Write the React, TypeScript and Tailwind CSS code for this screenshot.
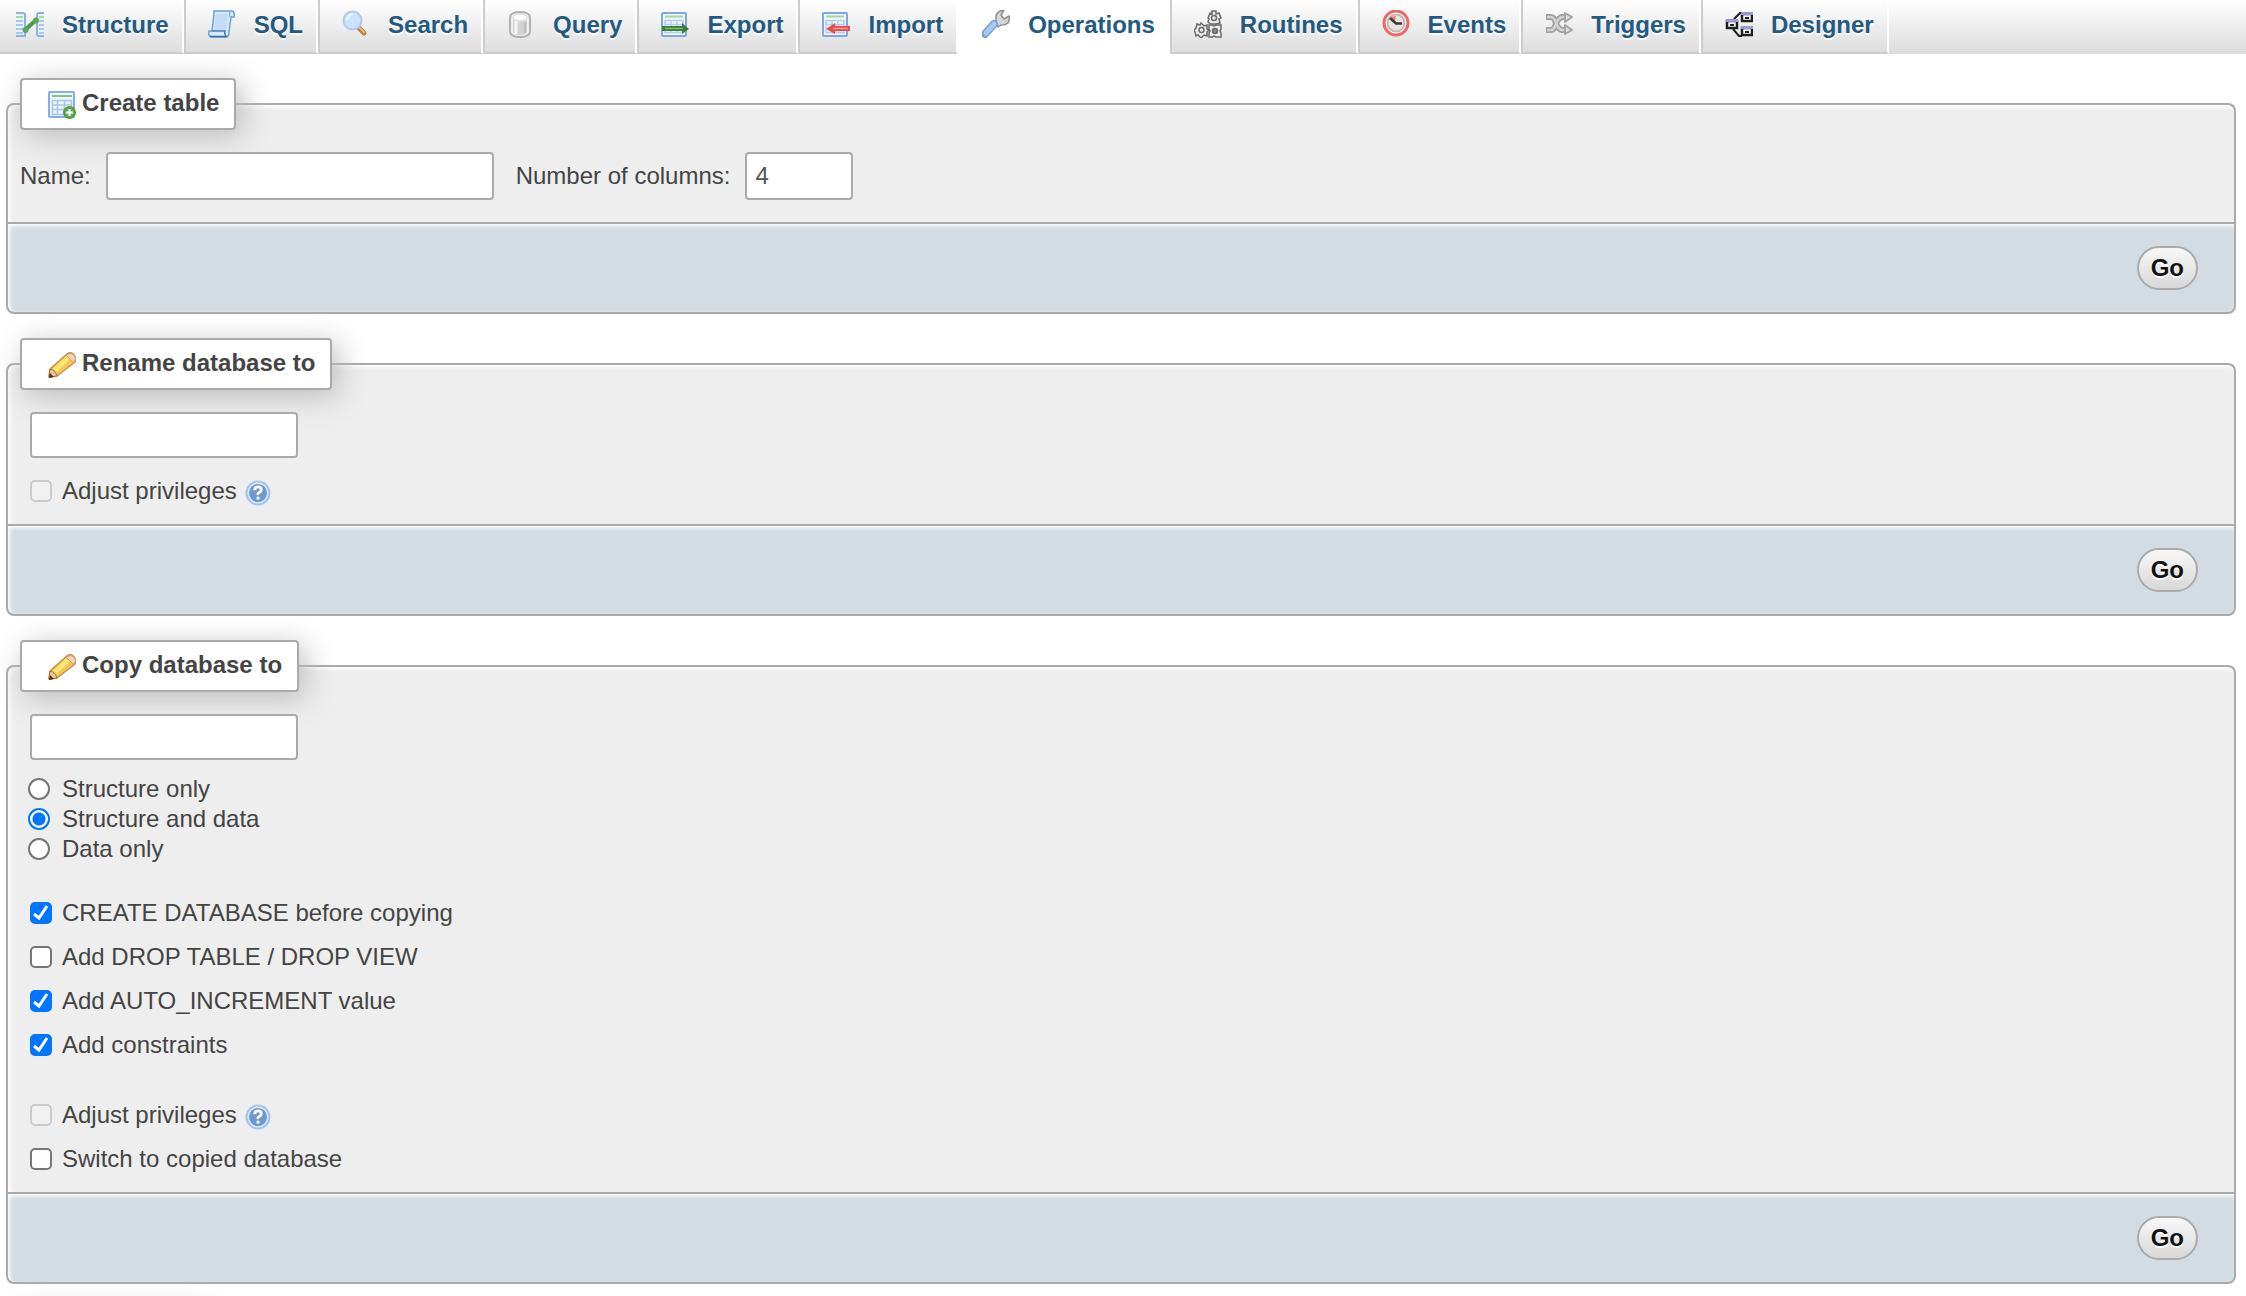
import React, { useState } from 'react';

type IconProps = { className?: string };

// Small drawings, all on a 28x28 grid

function StructureIcon({ className }: IconProps) {
  return (
    <svg viewBox="0 0 28 28" className={className} aria-hidden="true">
      <path d="M0 3h7q2 0 2 2v21H0M28 3h-5q-2 0-2 2v19q0 2 2 2h5" fill="#eaf3ff" stroke="#8db1e6" strokeWidth="2" />
      <path d="M0 7h7M23 7h5" stroke="#a9dd96" strokeWidth="2" />
      <path d="M0 11h7M0 15h7M0 19h7M0 23h7M23 11h5M23 15h5M23 19h5M23 23h5" stroke="#a6c8f2" strokeWidth="2" />
      <path d="M9 20 20 10" stroke="#4f9a49" strokeWidth="4" />
      <circle cx="9.500" cy="20" r="3" fill="#5da854" />
      <circle cx="20" cy="10.500" r="3" fill="#5da854" />
    </svg>
  );
}

function SqlIcon({ className }: IconProps) {
  return (
    <svg viewBox="0 0 28 28" className={className} aria-hidden="true">
      <path d="M6 1h18q3 1 2 6h-3l-2 15q0 5-3 5H3q-3-1-2-6h3L6 4z" fill="#d7e9fd" stroke="#6d9fdb" strokeWidth="1.500" />
      <path d="M8 4h12l-2 17H6z" fill="#c3dcf8" />
      <path d="M4 21h13q-1 3 1 5" fill="none" stroke="#4a78b5" strokeWidth="1.500" />
      <path d="M2 26.500h17" stroke="#3e6aa3" strokeWidth="1.500" />
      <path d="M22 2q-1 2 0 5" fill="none" stroke="#6d9fdb" />
    </svg>
  );
}

function SearchIcon({ className }: IconProps) {
  return (
    <svg viewBox="0 0 28 28" className={className} aria-hidden="true">
      <path d="m17 18 5 5" stroke="#bb8145" strokeWidth="5" strokeLinecap="round" />
      <path d="m17 17 5 5" stroke="#e6b97a" strokeWidth="2" strokeLinecap="round" />
      <circle cx="10.500" cy="10.500" r="9" fill="#cbe3fd" stroke="#b3c8ea" strokeWidth="2" />
      <path d="M5 10q1-5 6-6" fill="none" stroke="#eef7ff" strokeWidth="2" />
    </svg>
  );
}

function QueryIcon({ className }: IconProps) {
  return (
    <svg viewBox="0 0 28 28" className={className} aria-hidden="true">
      <path d="M3 7q1-5 10-5t10 5v15q-1 5-10 5T3 22z" fill="#f0f0f0" stroke="#b0b0b0" strokeWidth="2" />
      <path d="M6 10v12q2 3 7 3t7-3V10q-3 2-7 2t-7-2z" fill="#d2d2d2" />
      <path d="M9 11v13" stroke="#f6f6f6" strokeWidth="3" />
      <path d="M18 12v11" stroke="#bdbdbd" strokeWidth="2" />
      <ellipse cx="13" cy="7.500" rx="7" ry="3.500" fill="#fbfbfb" stroke="#d8d8d8" />
    </svg>
  );
}

function SheetBase() {
  return (
    <>
      <rect x="1" y="3" width="24" height="23" rx="1" fill="#f0f6ff" stroke="#7fa8e2" strokeWidth="2" />
      <path d="M4 6.500h18" stroke="#a5d893" strokeWidth="2" />
      <path d="M4 10.500h18v12H4zM4 14.500h18M4 18.500h18M10 10v12M16 10v12" fill="none" stroke="#b3cdf0" strokeWidth="1.500" />
    </>
  );
}

function ExportIcon({ className }: IconProps) {
  return (
    <svg viewBox="0 0 28 28" className={className} aria-hidden="true">
      <SheetBase />
      <path d="M1 16h20v-3l7 6-7 5v-3H1z" fill="#3c7d36" />
      <path d="M4 18.500h18" stroke="#79bb6b" strokeWidth="1.500" />
    </svg>
  );
}

function ImportIcon({ className }: IconProps) {
  return (
    <svg viewBox="0 0 28 28" className={className} aria-hidden="true">
      <SheetBase />
      <path d="M28 16H13v-3l-9 6 9 5v-3h15z" fill="#ec4a48" />
      <path d="M11 18.500h15" stroke="#ff9d98" strokeWidth="1.500" />
    </svg>
  );
}

function WrenchIcon({ className }: IconProps) {
  return (
    <svg viewBox="0 0 28 28" className={className} aria-hidden="true">
      <path
        d="M14 12V6q1-5 8-6l-3 5 3 4 5-3q2 9-8 9l-3 2z"
        fill="#d6d6d6"
        stroke="#8d8d8d"
        strokeWidth="1.500"
        strokeLinejoin="round"
      />
      <path d="m3 24 9-10" stroke="#7d9fda" strokeWidth="8" strokeLinecap="round" />
      <path d="m4 23 8-9" stroke="#a9c8f4" strokeWidth="5" strokeLinecap="round" />
    </svg>
  );
}

function RoutinesIcon({ className }: IconProps) {
  return (
    <svg viewBox="0 0 28 28" className={className} aria-hidden="true">
      <g fill="#ececec" stroke="#6b6b6b" strokeWidth="1.500">
        <path d="M18 1h4v3l3-1 2 5-2 1 1 4-4 1h-5l-3-2 1-3-1-1 2-5 2 1z" />
        <path d="m7 13 3 3 3-1v4l2 1-2 2v4l-3-1-3 3-3-3-2 1-1-4-1-2 2-2 1-4 3 1z" />
        <path d="M15 15h3l2 1 2-1h5v4l-1 2 1 2v4h-5l-2-1-2 1h-3v-4l1-2-1-2z" />
        <circle cx="20" cy="8" r="2.500" />
        <circle cx="7.500" cy="20" r="2.500" />
        <circle cx="21" cy="21" r="2.500" fill="#8b8b8b" />
      </g>
    </svg>
  );
}

function EventsIcon({ className }: IconProps) {
  return (
    <svg viewBox="0 0 28 28" className={className} aria-hidden="true">
      <circle cx="14" cy="13" r="12" fill="#fff" stroke="#ee6a67" strokeWidth="3" />
      <circle cx="14" cy="13" r="8.500" fill="#e8e5e2" stroke="#bdbab8" strokeWidth="2" />
      <path d="m13 12 1-6-5 1z" fill="#f37b78" />
      <path d="m8 8 6 5.500h6" fill="none" stroke="#3a3a3a" strokeWidth="2.500" />
    </svg>
  );
}

function TriggersIcon({ className }: IconProps) {
  return (
    <svg viewBox="0 0 28 28" className={className} aria-hidden="true">
      <g fill="none" strokeLinejoin="round">
        <path d="M1 7h5q3 0 5 6t6 7h4M1 20h5q3 0 5-6t6-7h4" stroke="#a0a0a0" strokeWidth="6" />
        <path d="M2 7h4q3 0 5 6t6 7h4M2 20h4q3 0 5-6t6-7h4" stroke="#d2d2d2" strokeWidth="2.500" />
      </g>
      <path d="m20 3 7 4-7 5zM20 15l7 5-7 4z" fill="#dedede" stroke="#a4a4a4" strokeWidth="2" strokeLinejoin="round" />
    </svg>
  );
}

function DesignerIcon({ className }: IconProps) {
  return (
    <svg viewBox="0 0 28 28" className={className} aria-hidden="true">
      <path d="m9 9 6-6h3M8 19l6 7h3" fill="none" stroke="#1f1f1f" strokeWidth="2" />
      <g fill="#fff" stroke="#1f1f1f" strokeWidth="2.500">
        <path d="M2 11v7h10v-7zM17 4v7h10V4zM17 18v7h10v-7z" />
        <path d="M5 15h4M20 8h4M20 22h4" strokeWidth="2" />
      </g>
      <path d="M1 9h12v3H1zM16 2h12v3H16zM16 16h12v3H16z" fill="#9a9ad2" />
    </svg>
  );
}

function NewTableIcon({ className }: IconProps) {
  return (
    <svg viewBox="0 0 28 28" className={className} aria-hidden="true">
      <rect x="1" y="1" width="25" height="25" rx="1" fill="#eef5ff" stroke="#85ade8" strokeWidth="2" />
      <path d="M4 5h20" stroke="#85c66f" strokeWidth="2" />
      <path d="M4.500 9.500h19v14h-19zM4.500 14h19M4.500 18.500h19M9.500 9v14M16.500 9v14" fill="none" stroke="#a5c4ee" strokeWidth="1.500" />
      <circle cx="21.500" cy="21.500" r="6.500" fill="#4c9a3d" />
      <circle cx="21.500" cy="21.500" r="5" fill="#62ad50" />
      <path d="M21.500 18v7M18 21.500h7" stroke="#fff" strokeWidth="2" />
    </svg>
  );
}

function PencilIcon({ className }: IconProps) {
  return (
    <svg viewBox="0 0 28 28" className={className} aria-hidden="true">
      <path d="m1 26 1-8L19 3q4-3 7 1t1 7L9 25z" fill="#f3c75a" stroke="#c98f3c" strokeWidth="1.500" strokeLinejoin="round" />
      <path d="M7 19 20 7" stroke="#fbe873" strokeWidth="5" />
      <path d="m18 4 8 8q3-5 0-8t-8 0z" fill="#f3d6c0" stroke="#d19a63" />
      <path d="m1 26 1-8q5 1 7 7z" fill="#eccb9c" stroke="#a86f2b" />
      <path d="m1 27 1-5 4 4z" fill="#4c3418" />
    </svg>
  );
}

function HelpIcon({ className }: IconProps) {
  return (
    <svg viewBox="0 0 28 28" className={className} aria-hidden="true">
      <circle cx="14" cy="14" r="13.500" fill="#a4c4ec" />
      <circle cx="14" cy="14" r="10.500" fill="#6e99d0" stroke="#dbe9fa" strokeWidth="1.500" />
      <path d="M10.500 11q0-3.500 3.500-3.500t3.500 3q0 2-2 3T14 16" fill="none" stroke="#fff" strokeWidth="3" />
      <path d="M12.500 18h3v3h-3z" fill="#fff" />
    </svg>
  );
}

const tabs = [
  { label: 'Structure', icon: StructureIcon },
  { label: 'SQL', icon: SqlIcon },
  { label: 'Search', icon: SearchIcon },
  { label: 'Query', icon: QueryIcon },
  { label: 'Export', icon: ExportIcon },
  { label: 'Import', icon: ImportIcon },
  { label: 'Operations', icon: WrenchIcon },
  { label: 'Routines', icon: RoutinesIcon },
  { label: 'Events', icon: EventsIcon },
  { label: 'Triggers', icon: TriggersIcon },
  { label: 'Designer', icon: DesignerIcon },
];

function TopMenu({ active }: { active: string }) {
  return (
    <nav className="flex h-[54px] bg-linear-to-b from-white to-[#dcdcdc]">
      {tabs.map(({ label, icon: Icon }) => (
        <a
          key={label}
          href="#"
          aria-current={label === active ? 'page' : undefined}
          className={`flex shrink-0 items-start gap-[18px] border-x-2 border-b-2 border-r-white pt-[10px] pr-[13px] pl-[22px] font-bold text-[#235a81] [text-shadow:0_2px_0_#fff] first:border-l-0 first:pl-4 ${
            label === active ? 'border-b-white border-l-white bg-white' : 'border-b-[#ccc] border-l-[#ccc]'
          }`}
        >
          <Icon className="size-7" />
          {label}
        </a>
      ))}
    </nav>
  );
}

type PanelProps = {
  title: string;
  icon: (props: IconProps) => React.ReactElement;
  children: React.ReactNode;
};

function Panel({ title, icon: Icon, children }: PanelProps) {
  return (
    <form onSubmit={(e) => e.preventDefault()}>
      <fieldset className="min-w-0 rounded-t-lg border-2 border-b-0 border-[#aaa] bg-[#eee] px-3 shadow-[inset_2px_2px_4px_#fff]">
        <legend className="flex h-[52px] items-center gap-[6px] rounded-[4px] border-2 border-[#aaa] bg-white pr-[15px] pb-[2px] pl-[26px] font-bold shadow-[6px_6px_30px_#bbb]">
          <Icon className="mt-1 size-7" />
          {title}
        </legend>
        {children}
      </fieldset>
      <div className="flex justify-end rounded-b-lg border-2 border-[#aaa] bg-[#d3dce3] py-[22px] pr-9 shadow-[inset_2px_2px_4px_#fff]">
        <button
          type="submit"
          className="h-11 rounded-full border-2 border-[#aaa] bg-linear-to-b from-[#f8f8f8] to-[#d8d8d8] px-3 leading-none font-bold text-[#111] [text-shadow:0_2px_0_#fff]"
        >
          Go
        </button>
      </div>
    </form>
  );
}

const inputClass = 'rounded-[4px] border-2 border-[#aaa] bg-white px-2 text-[#555] outline-none';

type CheckProps = {
  id: string;
  label: string;
  defaultChecked?: boolean;
  disabled?: boolean;
  help?: boolean;
};

function Check({ id, label, defaultChecked, disabled, help }: CheckProps) {
  return (
    <div className="flex h-11 items-center pl-2">
      <span className="mr-[10px] grid size-[22px]">
        <input
          id={id}
          type="checkbox"
          defaultChecked={defaultChecked}
          disabled={disabled}
          className="peer col-start-1 row-start-1 size-[22px] appearance-none rounded-[5px] border-2 border-[#767676] bg-white checked:border-[#0075ff] checked:bg-[#0075ff] disabled:border-[#cbcbcb] disabled:bg-[#f1f1f1]"
        />
        <svg
          viewBox="0 0 22 22"
          className="pointer-events-none invisible col-start-1 row-start-1 size-[22px] peer-checked:visible"
          aria-hidden="true"
        >
          <path d="m4 12 5 4 8-12" fill="none" stroke="#fff" strokeWidth="3" />
        </svg>
      </span>
      <label htmlFor={id}>{label}</label>
      {help && (
        <a href="#" aria-label="Documentation" className="mt-1 ml-2">
          <HelpIcon className="size-[26px]" />
        </a>
      )}
    </div>
  );
}

const copyModes = ['Structure only', 'Structure and data', 'Data only'];

export default function App() {
  const [mode, setMode] = useState('Structure and data');

  return (
    <div className="h-screen overflow-hidden bg-white font-['Liberation_Sans',Arial,sans-serif] text-[24px] leading-[30px] text-[#444]">
      <TopMenu active="Operations" />

      <main className="flex flex-col gap-6 pt-6 pr-[10px] pl-[6px]">
        <Panel title="Create table" icon={NewTableIcon}>
          <div className="flex items-center py-[22px]">
            <label htmlFor="table-name">Name:</label>
            <input id="table-name" type="text" className={`${inputClass} mr-[22px] ml-[15px] h-12 w-[388px]`} />
            <label htmlFor="num-columns">Number of columns:</label>
            <input id="num-columns" type="text" defaultValue="4" className={`${inputClass} ml-[15px] h-12 w-[108px]`} />
          </div>
        </Panel>

        <Panel title="Rename database to" icon={PencilIcon}>
          <div className="px-[2px] pt-[22px] pb-[11px]">
            <input
              type="text"
              aria-label="New database name"
              className={`${inputClass} mb-[11px] ml-2 block h-[46px] w-[268px]`}
            />
            <Check id="rename-privileges" label="Adjust privileges" disabled help />
          </div>
        </Panel>

        <Panel title="Copy database to" icon={PencilIcon}>
          <div className="px-[2px] pt-[22px] pb-[11px]">
            <input
              type="text"
              aria-label="Copy name"
              className={`${inputClass} mb-[14px] ml-2 block h-[46px] w-[268px]`}
            />

            {copyModes.map((m) => (
              <label key={m} className="flex h-[30px] items-center gap-3 pl-[6px]">
                <input
                  type="radio"
                  name="what"
                  checked={mode === m}
                  onChange={() => setMode(m)}
                  className="size-[22px] appearance-none rounded-full border-2 border-[#767676] bg-white checked:border-[#0075ff] checked:bg-[radial-gradient(circle,#0075ff_6px,#fff_7px)]"
                />
                {m}
              </label>
            ))}

            <div className="mt-[27px] mb-[26px]">
              <Check id="create-db" label="CREATE DATABASE before copying" defaultChecked />
              <Check id="drop-table" label="Add DROP TABLE / DROP VIEW" />
              <Check id="auto-increment" label="Add AUTO_INCREMENT value" defaultChecked />
              <Check id="constraints" label="Add constraints" defaultChecked />
            </div>

            <Check id="copy-privileges" label="Adjust privileges" disabled help />
            <Check id="switch-db" label="Switch to copied database" />
          </div>
        </Panel>

        {/* Top edge of the next panel's title box */}
        <div className="ml-[14px] h-[52px] w-[180px] shrink-0 bg-white shadow-[6px_6px_30px_#bbb]" />
      </main>
    </div>
  );
}
